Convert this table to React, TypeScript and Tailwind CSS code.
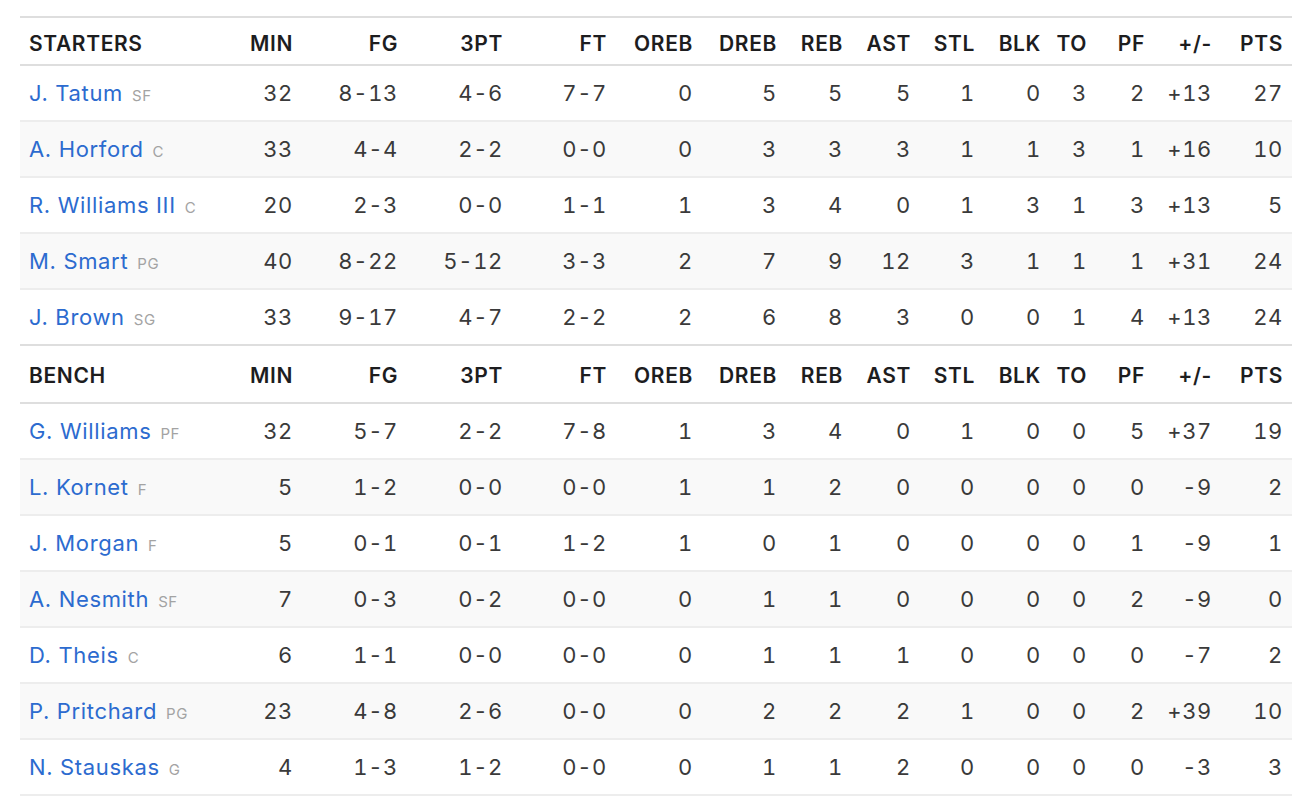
type Player = {
  name: string;
  pos: string;
  stats: (string | number)[];
};

const columns = ['MIN', 'FG', '3PT', 'FT', 'OREB', 'DREB', 'REB', 'AST', 'STL', 'BLK', 'TO', 'PF', '+/-', 'PTS'];

const starters: Player[] = [
  { name: 'J. Tatum', pos: 'SF', stats: [32, '8-13', '4-6', '7-7', 0, 5, 5, 5, 1, 0, 3, 2, '+13', 27] },
  { name: 'A. Horford', pos: 'C', stats: [33, '4-4', '2-2', '0-0', 0, 3, 3, 3, 1, 1, 3, 1, '+16', 10] },
  { name: 'R. Williams III', pos: 'C', stats: [20, '2-3', '0-0', '1-1', 1, 3, 4, 0, 1, 3, 1, 3, '+13', 5] },
  { name: 'M. Smart', pos: 'PG', stats: [40, '8-22', '5-12', '3-3', 2, 7, 9, 12, 3, 1, 1, 1, '+31', 24] },
  { name: 'J. Brown', pos: 'SG', stats: [33, '9-17', '4-7', '2-2', 2, 6, 8, 3, 0, 0, 1, 4, '+13', 24] },
];

const bench: Player[] = [
  { name: 'G. Williams', pos: 'PF', stats: [32, '5-7', '2-2', '7-8', 1, 3, 4, 0, 1, 0, 0, 5, '+37', 19] },
  { name: 'L. Kornet', pos: 'F', stats: [5, '1-2', '0-0', '0-0', 1, 1, 2, 0, 0, 0, 0, 0, '-9', 2] },
  { name: 'J. Morgan', pos: 'F', stats: [5, '0-1', '0-1', '1-2', 1, 0, 1, 0, 0, 0, 0, 1, '-9', 1] },
  { name: 'A. Nesmith', pos: 'SF', stats: [7, '0-3', '0-2', '0-0', 0, 1, 1, 0, 0, 0, 0, 2, '-9', 0] },
  { name: 'D. Theis', pos: 'C', stats: [6, '1-1', '0-0', '0-0', 0, 1, 1, 1, 0, 0, 0, 0, '-7', 2] },
  { name: 'P. Pritchard', pos: 'PG', stats: [23, '4-8', '2-6', '0-0', 0, 2, 2, 2, 1, 0, 0, 2, '+39', 10] },
  { name: 'N. Stauskas', pos: 'G', stats: [4, '1-3', '1-2', '0-0', 0, 1, 1, 2, 0, 0, 0, 0, '-3', 3] },
];

const gridCols =
  'grid grid-cols-[212px_70px_105px_105px_104px_86px_84px_66px_68px_64px_66px_46px_58px_67px_71px]';

const HeaderRow = ({ label, className }: { label: string; className: string }) => (
  <div className={`${gridCols} items-center border-y-2 border-[#dedede] bg-white ${className}`}>
    <div className="pl-[9px] text-[21px] font-semibold tracking-[0.03em] text-[#1d1d1f]">{label}</div>
    {columns.map((col) => (
      <div key={col} className="pr-[9px] text-right text-[21px] font-semibold tracking-[0.03em] text-[#1d1d1f]">
        {col}
      </div>
    ))}
  </div>
);

const PlayerRow = ({ player, shaded, last }: { player: Player; shaded: boolean; last?: boolean }) => (
  <div
    className={`${gridCols} items-center ${last ? 'h-[54px]' : 'h-[56px] border-b-2 border-[#ededed]'} ${
      shaded ? 'bg-[#f9f9f9]' : 'bg-white'
    }`}
  >
    <div className="flex items-baseline gap-[9px] whitespace-nowrap pl-[9px]">
      <a href="#" className="text-[22px] tracking-[0.03em] text-[#2c6bcf]">
        {player.name}
      </a>
      <span className="text-[15px] tracking-[0.04em] text-[#a3a3a3]">{player.pos}</span>
    </div>
    {player.stats.map((value, i) => (
      <div key={i} className="pr-[9px] text-right text-[22px] tabular-nums tracking-[0.03em] text-[#3a3a3a]">
        {value}
      </div>
    ))}
  </div>
);

export default function App() {
  return (
    <div className="min-h-screen bg-white pl-[20px] pt-[16px] font-['Inter','Liberation_Sans',sans-serif]">
      <div className="w-[1272px]">
        <HeaderRow label="STARTERS" className="h-[50px] pt-[5px]" />
        {starters.map((p, i) => (
          <PlayerRow key={p.name} player={p} shaded={i % 2 === 1} last={i === starters.length - 1} />
        ))}
        <HeaderRow label="BENCH" className="h-[60px] pt-[4px]" />
        {bench.map((p, i) => (
          <PlayerRow key={p.name} player={p} shaded={i % 2 === 1} />
        ))}
      </div>
    </div>
  );
}
